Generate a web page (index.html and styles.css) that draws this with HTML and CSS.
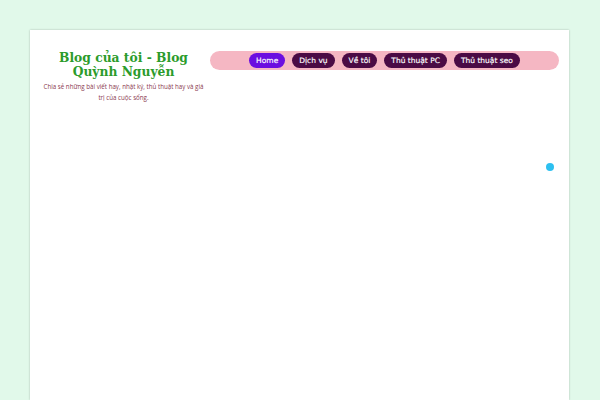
FILE: index.html
```html
<!DOCTYPE html>
<html>
<head>
<meta charset="utf-8">
<link rel="stylesheet" href="styles.css">
</head>
<body>
<div class="page">
  <header class="header">
    <div class="branding">
      <h1 class="site-title">Blog của tôi - Blog Quỳnh Nguyễn</h1>
      <p class="tagline">Chia sẻ những bài viết hay, nhật ký, thủ thuật hay và giá trị của cuộc sống.</p>
    </div>
    <nav class="nav">
      <a class="pill active">Home</a>
      <a class="pill">Dịch vụ</a>
      <a class="pill">Về tôi</a>
      <a class="pill">Thủ thuật PC</a>
      <a class="pill">Thủ thuật seo</a>
    </nav>
  </header>
  <div class="content">
    <span class="dot"></span>
  </div>
</div>
</body>
</html>
```
FILE: styles.css
```css
html, body {
  margin: 0;
  padding: 0;
  background: #e1f9ea;
  height: 100%;
}
.page {
  margin: 30px 0 0 30px;
  width: 539px;
  height: 370px;
  background: #fff;
  box-shadow: 0 0 2px rgba(0,0,0,0.25);
  box-sizing: border-box;
  padding: 0 10px;
  display: flex;
  flex-direction: column;
}
.header {
  display: flex;
  align-items: flex-start;
  gap: 3px;
  padding-top: 21px;
}
.branding {
  width: 167px;
  text-align: center;
}
.site-title {
  margin: 0;
  font-family: "DejaVu Serif", serif;
  font-weight: bold;
  font-size: 12.3px;
  line-height: 14px;
  color: #2b9b2b;
}
.tagline {
  margin: 2px 0 0;
  font-family: "Open Sans", sans-serif;
  font-size: 6.2px;
  line-height: 11px;
  color: #8b3a50;
}
.nav {
  flex: 1;
  margin-top: 0;
  height: 19px;
  background: #f5b7c3;
  border-radius: 10px;
  display: flex;
  justify-content: center;
  align-items: center;
  gap: 7px;
}
.pill {
  display: block;
  height: 15px;
  line-height: 15px;
  padding: 0 7px;
  border-radius: 8px;
  background: #4b0b45;
  color: #fff;
  font-family: "DejaVu Sans", sans-serif;
  font-size: 7.5px;
  font-weight: 500;
  -webkit-text-stroke: 0.15px #fff;
}
.pill.active {
  background: #6b0ee0;
}
.content {
  flex: 1;
  display: flex;
  justify-content: flex-end;
  padding-top: 60px;
}
.dot {
  display: block;
  width: 8px;
  height: 8px;
  border-radius: 50%;
  background: #2dc0f0;
  margin-right: 5px;
}
```
